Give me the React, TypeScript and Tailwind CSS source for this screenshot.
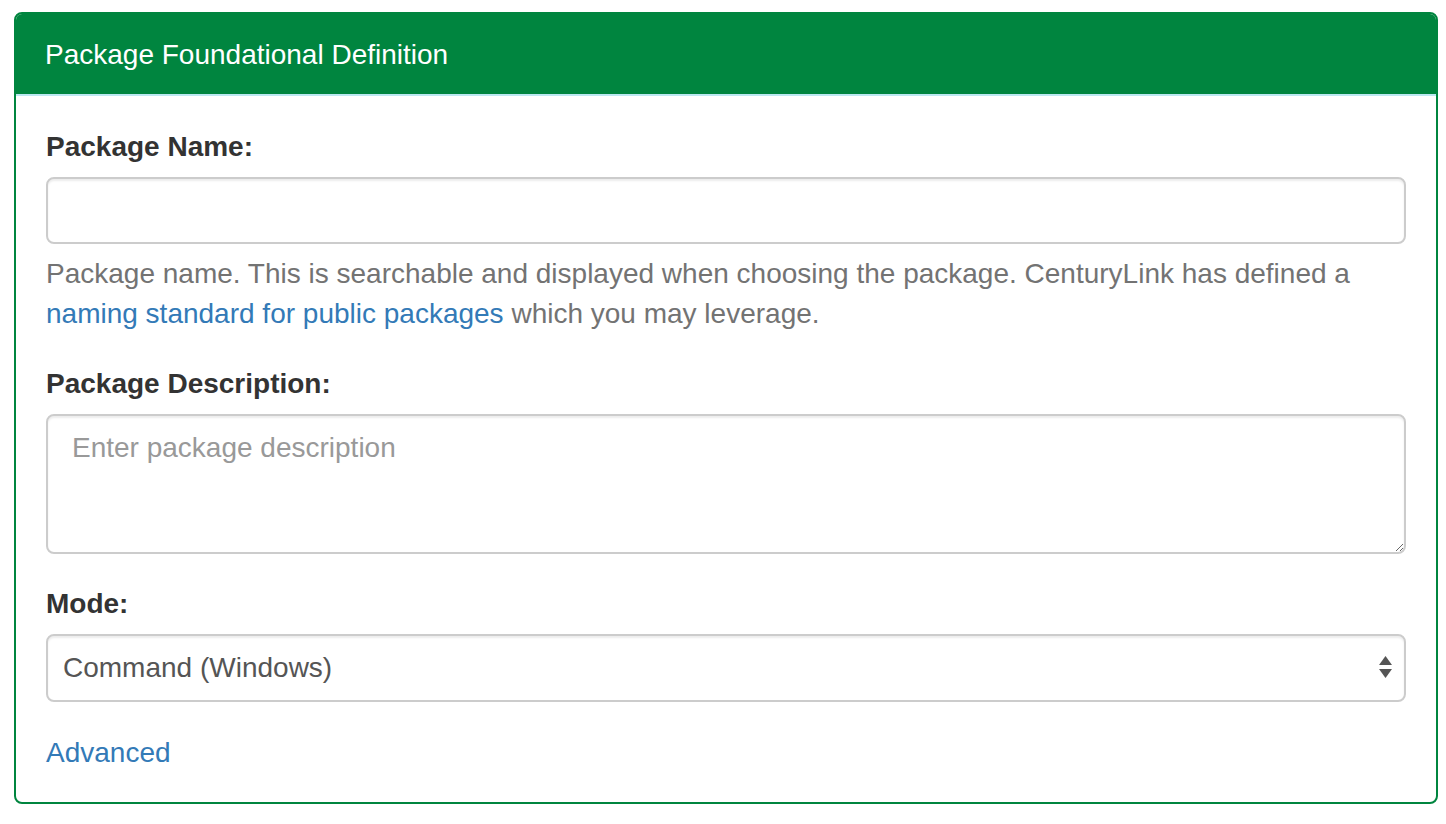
import React, { useState } from 'react';

const MODES = ['Command (Windows)', 'Command (Linux)', 'PowerShell', 'Bash'];

const fieldClass =
  'block w-full rounded-lg border-2 border-[#cccccc] bg-white text-[28px] leading-[40px] text-[#555555] shadow-[inset_0_2px_2px_rgba(0,0,0,0.075)] outline-none';

export default function App() {
  const [name, setName] = useState('');
  const [description, setDescription] = useState('');
  const [mode, setMode] = useState(MODES[0]);

  return (
    <div className="min-h-screen bg-white pt-[12px] pl-[14px] font-['Liberation_Sans',Arial,sans-serif]">
      <div className="w-[1424px] overflow-hidden rounded-lg border-2 border-[#00853f]">
        <div className="flex h-[82px] items-center border-b-2 border-[#bce8f1] bg-[#00853f] px-[29px] pt-[2px]">
          <h3 className="text-[28px] leading-[32px] text-white">Package Foundational Definition</h3>
        </div>

        <div className="px-[30px] pt-[31px] pb-[29px]">
          <div className="mb-[30px]">
            <label className="mb-[10px] block text-[28px] font-bold leading-[40px] text-[#333333]">Package Name:</label>
            <input
              type="text"
              value={name}
              onChange={(event) => setName(event.target.value)}
              className={`${fieldClass} h-[67px] px-[24px]`}
            />
            <p className="mt-[10px] text-[28px] leading-[40px] text-[#737373]">
              Package name. This is searchable and displayed when choosing the package. CenturyLink has defined a{' '}
              <a href="#" className="text-[#337ab7]">
                naming standard for public packages
              </a>{' '}
              which you may leverage.
            </p>
          </div>

          <div className="mb-[30px]">
            <label className="mb-[10px] block text-[28px] font-bold leading-[40px] text-[#333333]">
              Package Description:
            </label>
            <textarea
              value={description}
              onChange={(event) => setDescription(event.target.value)}
              placeholder="Enter package description"
              className={`${fieldClass} h-[140px] resize-y px-[24px] py-[12px] placeholder:text-[#999999]`}
            />
          </div>

          <div className="mb-[31px]">
            <label className="mb-[10px] block text-[28px] font-bold leading-[40px] text-[#333333]">Mode:</label>
            <div className="relative">
              <select
                value={mode}
                onChange={(event) => setMode(event.target.value)}
                className={`${fieldClass} h-[68px] appearance-none pl-[15px] pr-[50px]`}
              >
                {MODES.map((item) => (
                  <option key={item}>{item}</option>
                ))}
              </select>
              <svg
                className="pointer-events-none absolute right-[13px] top-[21px]"
                width="15"
                height="25"
                viewBox="0 0 15 25"
              >
                <path d="M7.5 1 L14 10 L1 10 Z" fill="#555555" />
                <path d="M1 14 L14 14 L7.5 23 Z" fill="#555555" />
              </svg>
            </div>
          </div>

          <a href="#" className="block text-[28px] leading-[40px] text-[#337ab7]">
            Advanced
          </a>
        </div>
      </div>
    </div>
  );
}
